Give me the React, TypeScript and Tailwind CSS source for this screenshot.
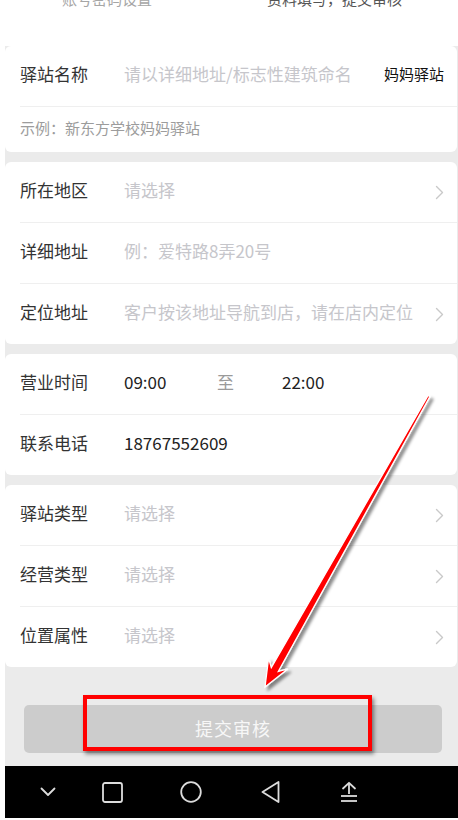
import React from "react";

const font = { fontFamily: '"Noto Sans CJK SC", "Noto Sans", sans-serif' };

function Chevron() {
  return (
    <svg width="9" height="15" viewBox="0 0 9 15" className="shrink-0">
      <polyline points="1.5,1.5 7.5,7.5 1.5,13.5" fill="none" stroke="#c9c9c9" strokeWidth="1.4" strokeLinecap="round" strokeLinejoin="round" />
    </svg>
  );
}

function Divider() {
  return <div className="h-px bg-[#efefef] ml-[15px]" />;
}

function Row({ label, placeholder, value, arrow }: { label: string; placeholder?: string; value?: string; arrow?: boolean }) {
  return (
    <div className="flex items-center h-[60px] pl-[15px] pr-[13px]">
      <div className="w-[104px] shrink-0 text-[17px] text-[#333333] leading-[24px] pb-[4px]">{label}</div>
      <div className="flex-1 text-[17px] leading-[24px] pb-[4px] text-[#c6c6cb] whitespace-nowrap">
        {value ? <span className="text-[#222222]">{value}</span> : placeholder}
      </div>
      {arrow && <Chevron />}
    </div>
  );
}

export default function App() {
  return (
    <div className="relative w-[458px] h-[820px] bg-white flex overflow-hidden" style={font}>
      <div className="ml-[5px] flex-1 flex flex-col">
        {/* header */}
        <div className="h-[46px] bg-white flex items-start overflow-hidden">
          <div className="pl-[57px] -mt-[9px] text-[15px] leading-[15px] text-[#a6a6a6] whitespace-nowrap">账号密码设置</div>
          <div className="ml-[115px] -mt-[9px] text-[15px] leading-[15px] text-[#555555] whitespace-nowrap">资料填写，提交审核</div>
        </div>

        {/* body */}
        <div className="bg-[#ebebeb] flex flex-col gap-[10px]">
          <div className="bg-white rounded-[6px] mr-px">
            <div className="flex items-center h-[60px] pl-[15px] pr-[13px]">
              <div className="w-[104px] shrink-0 text-[17px] text-[#333333] leading-[24px] pb-[4px]">驿站名称</div>
              <div className="flex-1 text-[17px] leading-[24px] pb-[4px] text-[#c6c6cb] whitespace-nowrap">请以详细地址/标志性建筑命名</div>
              <div className="text-[15px] leading-[22px] pb-[4px] text-[#111111]">妈妈驿站</div>
            </div>
            <Divider />
            <div className="h-[45px] flex items-center pl-[15px] pb-[4px] text-[15px] leading-[22px] text-[#9c9c9c]">示例：新东方学校妈妈驿站</div>
          </div>

          <div className="bg-white rounded-[6px] mr-px">
            <Row label="所在地区" placeholder="请选择" arrow />
            <Divider />
            <Row label="详细地址" placeholder="例：爱特路8弄20号" />
            <Divider />
            <Row label="定位地址" placeholder="客户按该地址导航到店，请在店内定位" arrow />
          </div>

          <div className="bg-white rounded-[6px] mr-px">
            <div className="flex items-center h-[60px] pl-[15px] pr-[13px]">
              <div className="w-[104px] shrink-0 text-[17px] text-[#333333] leading-[24px] pb-[4px]">营业时间</div>
              <div className="w-[93px] text-[17px] leading-[24px] pb-[4px] text-[#222222]">09:00</div>
              <div className="w-[65px] text-[17px] leading-[24px] pb-[4px] text-[#9a9a9a]">至</div>
              <div className="text-[17px] leading-[24px] pb-[4px] text-[#222222]">22:00</div>
            </div>
            <Divider />
            <Row label="联系电话" value="18767552609" />
          </div>

          <div className="bg-white rounded-[6px] mr-px">
            <Row label="驿站类型" placeholder="请选择" arrow />
            <Divider />
            <Row label="经营类型" placeholder="请选择" arrow />
            <Divider />
            <Row label="位置属性" placeholder="请选择" arrow />
          </div>

          <div className="pt-[28px] pb-[13px] pl-[19px] pr-[16px]">
            <div className="h-[48px] rounded-[5px] bg-[#cccccc] flex items-center justify-center pb-[3px] text-[18px] leading-[26px] text-[#f7f7f7] tracking-[1px]">
              提交审核
            </div>
          </div>
        </div>

        {/* nav bar */}
        <div className="h-[52px] bg-black flex items-center pl-[31px]">
          <div className="w-[24px] flex justify-center">
            <svg width="16" height="10" viewBox="0 0 16 10">
              <polyline points="1.5,1.5 8,8 14.5,1.5" fill="none" stroke="#dcdcdc" strokeWidth="1.8" strokeLinecap="round" strokeLinejoin="round" />
            </svg>
          </div>
          <div className="w-[24px] flex justify-center ml-[40px]">
            <svg width="21" height="21" viewBox="0 0 21 21">
              <rect x="1" y="1" width="19" height="19" rx="2" fill="none" stroke="#dcdcdc" strokeWidth="1.8" />
            </svg>
          </div>
          <div className="w-[24px] flex justify-center ml-[55px]">
            <svg width="22" height="22" viewBox="0 0 22 22">
              <circle cx="11" cy="11" r="9.8" fill="none" stroke="#dcdcdc" strokeWidth="1.8" />
            </svg>
          </div>
          <div className="w-[24px] flex justify-center ml-[55px]">
            <svg width="19" height="22" viewBox="0 0 19 22">
              <polygon points="17.5,1 1.5,11 17.5,21" fill="none" stroke="#dcdcdc" strokeWidth="1.8" strokeLinejoin="round" />
            </svg>
          </div>
          <div className="w-[24px] flex justify-center ml-[55px]">
            <svg width="18" height="22" viewBox="0 0 18 22">
              <polyline points="3,7.5 9,1.8 15,7.5" fill="none" stroke="#dcdcdc" strokeWidth="1.8" strokeLinecap="round" strokeLinejoin="round" />
              <line x1="9" y1="2" x2="9" y2="13" stroke="#dcdcdc" strokeWidth="1.8" />
              <line x1="1" y1="15" x2="17" y2="15" stroke="#dcdcdc" strokeWidth="1.8" />
              <line x1="1" y1="20" x2="17" y2="20" stroke="#dcdcdc" strokeWidth="1.8" />
            </svg>
          </div>
        </div>
        <div className="h-[2px] bg-white" />
      </div>

      {/* annotation: red box */}
      <div className="absolute left-[83px] top-[695px] w-[289px] h-[56px] border-[4px] border-[#ff0000] shadow-[2px_3px_4px_rgba(0,0,0,0.45)] pointer-events-none" />

      {/* annotation: red arrow */}
      <svg className="absolute left-0 top-0 pointer-events-none" width="458" height="820" viewBox="0 0 458 820">
        <defs>
          <filter id="sh" x="-20%" y="-20%" width="140%" height="140%">
            <feDropShadow dx="3" dy="3" stdDeviation="1.8" floodColor="#000" floodOpacity="0.45" />
          </filter>
        </defs>
        <polygon
          points="429.9,396.5 278.3,671.5 287.8,668.9 265,687 268.6,658.1 271.3,667.6 428.1,395.5"
          fill="#ff0000"
          stroke="#ffffff"
          strokeWidth="1.3"
          strokeLinejoin="miter"
          filter="url(#sh)"
        />
      </svg>
    </div>
  );
}
